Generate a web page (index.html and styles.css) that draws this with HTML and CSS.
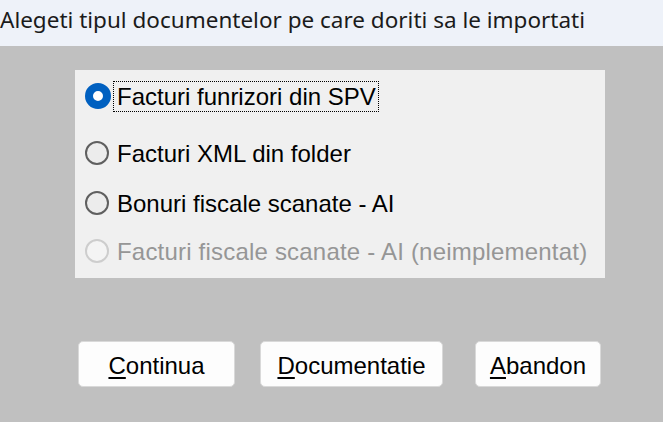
FILE: index.html
```html
<!DOCTYPE html>
<html lang="ro">
<head>
<meta charset="utf-8">
<title>Import documente</title>
<link rel="stylesheet" href="styles.css">
</head>
<body>
<div class="title">Alegeti tipul documentelor pe care doriti sa le importati</div>
<div class="main">
  <div class="panel">
    <div class="row row-1">
      <span class="radio checked"></span>
      <span class="label focus">Facturi funrizori din SPV</span>
    </div>
    <div class="row row-2">
      <span class="radio"></span>
      <span class="label">Facturi XML din folder</span>
    </div>
    <div class="row row-3">
      <span class="radio"></span>
      <span class="label">Bonuri fiscale scanate - AI</span>
    </div>
    <div class="row row-4 disabled">
      <span class="radio"></span>
      <span class="label">Facturi fiscale scanate - AI (neimplementat)</span>
    </div>
  </div>
  <div class="buttons">
    <div class="btn btn-continua"><u>C</u>ontinua</div>
    <div class="btn btn-doc"><u>D</u>ocumentatie</div>
    <div class="btn btn-abandon"><u>A</u>bandon</div>
  </div>
</div>
</body>
</html>
```

FILE: styles.css
```css
html, body {
  margin: 0;
  padding: 0;
  width: 663px;
  height: 422px;
  overflow: hidden;
  background: #c0c0c0;
}

.title {
  height: 46px;
  box-sizing: border-box;
  background: #eef2f9;
  color: #1b1b1b;
  font-family: "Noto Sans", "Open Sans", sans-serif;
  font-size: 22.5px;
  line-height: 40px;
  padding-left: 0;
  white-space: nowrap;
}

.main {
  height: 376px;
  background: #c0c0c0;
  padding-top: 24px;
  box-sizing: border-box;
}

.panel {
  margin-left: 75px;
  width: 530px;
  height: 208px;
  box-sizing: border-box;
  background: #f0f0f0;
  padding-top: 11px;
  padding-left: 10px;
  font-family: "Liberation Sans", Arial, sans-serif;
  font-size: 24px;
  color: #000;
}

.row {
  height: 30px;
  display: flex;
  align-items: center;
}

.row-2 {
  margin-top: 27px;
}

.row-3 {
  margin-top: 20px;
}

.row-4 {
  margin-top: 18px;
}

.radio {
  width: 24px;
  height: 24px;
  box-sizing: border-box;
  border-radius: 50%;
  border: 2px solid #5f5f5f;
  background: #ececec;
  flex: none;
}

.radio.checked {
  width: 26px;
  height: 26px;
  margin-right: -2px;
  border: 8px solid #0060c0;
  background: #ffffff;
}

.label {
  margin-left: 4px;
  height: 31px;
  line-height: 29px;
  box-sizing: border-box;
  border: 1px solid transparent;
  padding: 0 2px 0 3px;
  white-space: nowrap;
}

.row-4 .label {
  letter-spacing: 0.2px;
}

.label.focus {
  border: 1px dotted #000;
}

.disabled .radio {
  border-color: #cdcdcd;
  background: #f4f4f4;
}

.disabled .label {
  color: #969696;
}

.buttons {
  display: flex;
  margin-top: 63px;
  padding-left: 78px;
  font-family: "Liberation Sans", Arial, sans-serif;
  font-size: 24px;
  color: #000;
}

.btn {
  height: 46px;
  box-sizing: border-box;
  background: #fdfdfd;
  border: 1px solid #d9d9d9;
  border-radius: 5px;
  display: flex;
  align-items: center;
  justify-content: center;
  padding-top: 4px;
}

.btn u {
  text-decoration-thickness: 2px;
  text-underline-offset: 3px;
}

.btn-continua {
  width: 157px;
}

.btn-doc {
  width: 183px;
  margin-left: 25px;
}

.btn-abandon {
  width: 126px;
  margin-left: 32px;
}
```
